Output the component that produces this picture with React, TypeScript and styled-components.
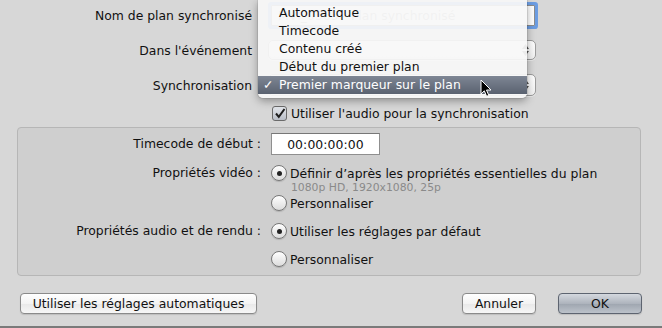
import styled, { createGlobalStyle, css } from "styled-components";

const GlobalStyle = createGlobalStyle`
  html, body {
    margin: 0;
    padding: 0;
    background: #d7d7d7;
  }
  body {
    font-family: "DejaVu Sans", "Noto Sans", sans-serif;
    font-size: 12.4px;
    color: #111;
  }
`;

const Window = styled.div`
  position: relative;
  width: 662px;
  height: 328px;
  box-sizing: border-box;
  background: #d7d7d7;
  border-bottom: 2px solid #7a7a7a;
  display: flex;
  flex-direction: column;
  overflow: hidden;
`;

const TopGrid = styled.div`
  display: grid;
  grid-template-columns: 252px 270px;
  grid-template-rows: 30px 30px 30px 16px;
  column-gap: 16px;
  row-gap: 5px;
  align-items: center;
`;

const Label = styled.span`
  justify-self: end;
  white-space: nowrap;
`;

const TextField = styled.div`
  height: 19px;
  margin: 0 3px 0 3px;
  background: #fff;
  border: 1px solid #8d8d8d;
  box-shadow: 0 0 0 3px #6c9de2;
  border-radius: 1px;
  display: flex;
  align-items: center;
  padding-left: 6px;
  color: #9a9a9a;
  white-space: nowrap;
  overflow: hidden;
`;

const Popup = styled.div<{ $h: number }>`
  position: relative;
  height: ${(p) => p.$h}px;
  box-sizing: border-box;
  border: 1px solid #9c9c9c;
  border-radius: 5px;
  background: linear-gradient(#ffffff, #f1f1f1);
  box-shadow: 0 1px 0 rgba(255, 255, 255, 0.5);
  margin-right: 2px;
`;

const Stepper = styled.svg`
  position: absolute;
  right: 6px;
  top: 50%;
  transform: translateY(-50%);
`;

const CheckRow = styled.label`
  display: flex;
  align-items: center;
  gap: 4px;
  padding-left: 4px;
  white-space: nowrap;
`;

const CheckBox = styled.span`
  width: 13px;
  height: 13px;
  border: 1px solid #6b6b6b;
  border-radius: 3px;
  background: linear-gradient(#e4e7ec, #b9bec7);
  display: flex;
  align-items: center;
  justify-content: center;
  flex: none;
`;

const Menu = styled.div`
  position: absolute;
  left: 258px;
  top: 0;
  width: 269px;
  padding: 4px 0 4px;
  background: rgba(247, 247, 247, 0.93);
  border-radius: 0 0 5px 5px;
  box-shadow: 0 3px 8px rgba(0, 0, 0, 0.35), 0 0 0 1px rgba(0, 0, 0, 0.08);
`;

const MenuItem = styled.div<{ $selected?: boolean }>`
  position: relative;
  height: 18px;
  line-height: 18px;
  padding-left: 21px;
  white-space: nowrap;
  color: #111;
  ${(p) =>
    p.$selected &&
    css`
      color: #fff;
      background: linear-gradient(#7e8694, #5a6270);
    `}
`;

const Check = styled.span`
  position: absolute;
  left: 5px;
  top: 0;
`;

const Cursor = styled.svg`
  position: absolute;
  left: 480px;
  top: 79px;
`;

const Group = styled.div`
  margin: 6px 21px 0 17px;
  height: 149px;
  box-sizing: border-box;
  border: 1px solid #b6b6b6;
  border-radius: 4px;
  background: #cfcfcf;
  padding: 5px 0 0;
  display: grid;
  grid-template-columns: 243px 1fr;
  column-gap: 10px;
  align-content: start;
`;

const GroupLabel = styled.span<{ $top?: number }>`
  justify-self: end;
  white-space: nowrap;
  line-height: 16px;
  margin-top: ${(p) => p.$top ?? 0}px;
`;

const TimeField = styled.div`
  width: 107px;
  height: 20px;
  background: #fff;
  border: 1px solid #8f8f8f;
  border-top-color: #777;
  display: flex;
  align-items: center;
  justify-content: center;
  letter-spacing: 0.1px;
`;

const Options = styled.div<{ $top: number; $gap: number }>`
  display: flex;
  flex-direction: column;
  gap: ${(p) => p.$gap}px;
  margin-top: ${(p) => p.$top}px;
`;

const RadioRow = styled.label`
  display: flex;
  align-items: center;
  gap: 3px;
  height: 16px;
  white-space: nowrap;
`;

const RadioCircle = styled.span<{ $on?: boolean }>`
  width: 14px;
  height: 14px;
  border-radius: 50%;
  border: 1px solid #777;
  background: linear-gradient(#ffffff, #dcdcdc);
  box-shadow: 0 1px 1px rgba(0, 0, 0, 0.15);
  display: flex;
  align-items: center;
  justify-content: center;
  flex: none;
  &::after {
    content: "";
    width: 5px;
    height: 5px;
    border-radius: 50%;
    background: #222;
    display: ${(p) => (p.$on ? "block" : "none")};
  }
`;

const SubText = styled.div`
  font-size: 10.8px;
  line-height: 14px;
  color: #8a8a8a;
  padding-left: 20px;
`;

const ButtonRow = styled.div`
  display: flex;
  align-items: center;
  padding: 0 20px;
  margin-top: 17px;
  gap: 22px;
`;

const Spacer = styled.div`
  flex: 1;
`;

const Button = styled.button<{ $w: number; $default?: boolean }>`
  width: ${(p) => p.$w}px;
  height: 21px;
  box-sizing: border-box;
  font: inherit;
  color: #111;
  border: 1px solid #8a8a8a;
  border-radius: 4px;
  background: linear-gradient(#ffffff, #f3f3f3 50%, #e8e8e8 51%, #f6f6f6);
  box-shadow: 0 1px 1px rgba(0, 0, 0, 0.12);
  padding: 0;
  ${(p) =>
    p.$default &&
    css`
      border-color: #5d6470;
      background: linear-gradient(#d4d8de, #aeb4bd 50%, #9ea5af 51%, #bcc2ca);
    `}
`;

const menuItems = [
  "Automatique",
  "Timecode",
  "Contenu créé",
  "Début du premier plan",
  "Premier marqueur sur le plan",
];

export default function App() {
  return (
    <Window>
      <GlobalStyle />
      <TopGrid>
        <Label>Nom de plan synchronisé</Label>
        <TextField>MVI_0565 - Plan synchronisé</TextField>
        <Label>Dans l'événement</Label>
        <Popup $h={20}>
          <Stepper width="7" height="12" viewBox="0 0 7 12">
            <path d="M0 5 L3.5 0 L7 5 Z M0 7 L3.5 12 L7 7 Z" fill="#555" />
          </Stepper>
        </Popup>
        <Label>Synchronisation</Label>
        <Popup $h={22}>
          <Stepper width="7" height="12" viewBox="0 0 7 12">
            <path d="M0 5 L3.5 0 L7 5 Z M0 7 L3.5 12 L7 7 Z" fill="#555" />
          </Stepper>
        </Popup>
        <span />
        <CheckRow>
          <CheckBox>
            <svg width="12" height="11" viewBox="0 0 12 11">
              <path
                d="M2 5.5 L4.8 8.8 L10.5 1"
                stroke="#1e1e1e"
                strokeWidth="2"
                fill="none"
              />
            </svg>
          </CheckBox>
          Utiliser l'audio pour la synchronisation
        </CheckRow>
      </TopGrid>

      <Group>
        <GroupLabel $top={3}>Timecode de début :</GroupLabel>
        <TimeField>00:00:00:00</TimeField>

        <GroupLabel $top={10}>Propriétés vidéo :</GroupLabel>
        <Options $top={10} $gap={0}>
          <RadioRow>
            <RadioCircle $on />
            Définir d’après les propriétés essentielles du plan
          </RadioRow>
          <SubText>1080p HD, 1920x1080, 25p</SubText>
          <RadioRow>
            <RadioCircle />
            Personnaliser
          </RadioRow>
        </Options>

        <GroupLabel $top={12}>Propriétés audio et de rendu :</GroupLabel>
        <Options $top={12} $gap={12}>
          <RadioRow>
            <RadioCircle $on />
            Utiliser les réglages par défaut
          </RadioRow>
          <RadioRow>
            <RadioCircle />
            Personnaliser
          </RadioRow>
        </Options>
      </Group>

      <ButtonRow>
        <Button $w={237}>Utiliser les réglages automatiques</Button>
        <Spacer />
        <Button $w={74}>Annuler</Button>
        <Button $w={84} $default>
          OK
        </Button>
      </ButtonRow>

      <Menu>
        {menuItems.map((item, i) => (
          <MenuItem key={item} $selected={i === menuItems.length - 1}>
            {i === menuItems.length - 1 && <Check>✓</Check>}
            {item}
          </MenuItem>
        ))}
      </Menu>

      <Cursor width="13" height="19" viewBox="0 0 13 19">
        <path
          d="M1 1 L1 15 L4.3 11.8 L6.6 17.3 L8.8 16.4 L6.5 11 L11 11 Z"
          fill="#000"
          stroke="#fff"
          strokeWidth="1"
          strokeLinejoin="round"
        />
      </Cursor>
    </Window>
  );
}
